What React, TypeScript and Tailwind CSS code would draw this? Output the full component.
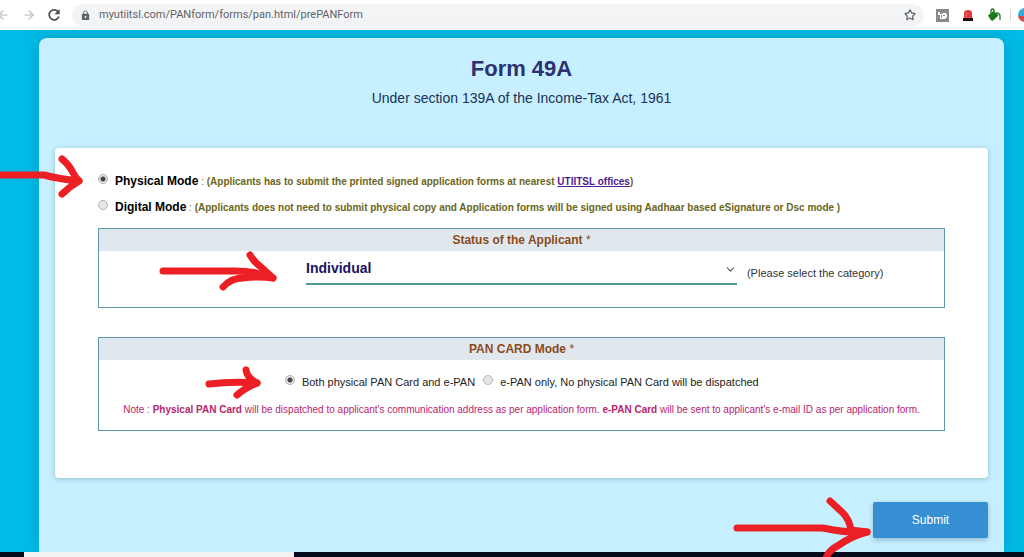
import { useState } from "react";
import type { ReactNode } from "react";
import { ArrowLeft, ArrowRight, ChevronDown, Star } from "lucide-react";
import { MdLock } from "react-icons/md";

type ArrowProps = {
  className: string;
  width: number;
  height: number;
  shaft: string;
  head: string;
};

function Arrow({ className, width, height, shaft, head }: ArrowProps) {
  return (
    <svg
      className={`pointer-events-none absolute z-10 overflow-visible ${className}`}
      width={width}
      height={height}
      fill="none"
      stroke="#ec2024"
      strokeWidth="7"
      strokeLinecap="round"
      strokeLinejoin="round"
      aria-hidden="true"
    >
      <path d={shaft} />
      <path d={head} />
    </svg>
  );
}

type RadioProps = {
  name: string;
  value: string;
  current: string;
  onSelect: (value: string) => void;
  className: string;
  children: ReactNode;
};

function Radio({ name, value, current, onSelect, className, children }: RadioProps) {
  const id = `${name}-${value}`;
  return (
    <div className={`flex items-center ${className}`}>
      <input
        id={id}
        type="radio"
        name={name}
        value={value}
        checked={current === value}
        onChange={() => onSelect(value)}
        className="mb-1 size-[10px] shrink-0 appearance-none rounded-full border border-[#b4b4b4] bg-[#e6e6e6] checked:bg-[radial-gradient(circle,#444_0_2px,#e6e6e6_3px)]"
      />
      <label htmlFor={id}>{children}</label>
    </div>
  );
}

function BrowserBar() {
  return (
    <header className="flex h-[30px] shrink-0 items-center overflow-hidden bg-white text-[#5f6368]">
      <button type="button" aria-label="Back" className="-ml-1 text-[#b5b5b5]">
        <ArrowLeft size={14} strokeWidth={2} />
      </button>
      <button type="button" aria-label="Forward" className="ml-3 text-[#b5b5b5]">
        <ArrowRight size={14} strokeWidth={2} />
      </button>
      <button type="button" aria-label="Reload" className="ml-[10px] text-[#4c4f53]">
        <svg width="16" height="16" viewBox="0 0 16 16" aria-hidden="true">
          <path fill="none" stroke="currentColor" strokeWidth="1.8" d="M12.300 5A5 5 0 1 0 12.900 9.500" />
          <path fill="currentColor" d="M13.700 2v5.300H8.400z" />
        </svg>
      </button>
      <div className="ml-[10px] flex h-[22px] min-w-0 flex-1 items-center rounded-full bg-[#f3f4f5] pr-2 pl-2">
        <MdLock size={11} className="shrink-0" />
        <input
          aria-label="Address"
          defaultValue="myutiitsl.com/PANform/forms/pan.html/prePANForm"
          className="ml-2 min-w-0 flex-1 bg-transparent font-['Roboto',sans-serif] text-[11px] outline-none"
        />
        <button type="button" aria-label="Bookmark">
          <Star size={12} strokeWidth={2.5} />
        </button>
      </div>
      <div className="ml-3 flex items-center gap-[13px]">
        <svg width="13" height="13" viewBox="0 0 13 13" aria-hidden="true">
          <path fill="#8a8a8a" d="M0 0h13v13H0z" />
          <path fill="#fff" d="M2 3h2v2h2l1-1h3l1 2v2l-2 2H4V6H2z" />
          <path fill="#8a8a8a" d="M5 6h1v3H5zM7 6h2v1H7z" />
        </svg>
        <svg width="12" height="13" viewBox="0 0 12 13" aria-hidden="true">
          <path fill="#e5393b" d="M2 9V4q0-3 4-3t4 3v5z" />
          <path fill="#fff" opacity=".3" d="M4 3h1v5H4z" />
          <path fill="#200b0b" d="M1 9h10v3H1z" />
        </svg>
        <svg width="14" height="14" viewBox="0 0 14 14" aria-hidden="true">
          <path fill="#187a18" d="M1 7.500 6.500 3l5 4.500-5.500 5q-1 .5-2-.3z" />
          <path fill="none" stroke="#187a18" strokeWidth="1.300" d="M4 6V3q0-2 1.500-2T7 3v4M9 5q4 0 4 3v4" />
        </svg>
        <span className="-ml-1 h-3 w-px bg-[#d5d5d5]" />
        <span className="-mr-2 -ml-[6px] size-[14px] rounded-full bg-[linear-gradient(#3aa7d8_55%,#d34b45_55%)]" />
      </div>
    </header>
  );
}

function Panel({ title, children }: { title: string; children: ReactNode }) {
  return (
    <section className="relative border border-[#5c98ae]">
      <h2 className="bg-[#e1e8ed] text-center text-[12px] leading-[22px] font-bold text-[#8b4a1c]">
        {title} <span className="font-normal">*</span>
      </h2>
      {children}
    </section>
  );
}

export default function App() {
  const [mode, setMode] = useState("physical");
  const [panMode, setPanMode] = useState("both");
  const [status, setStatus] = useState("Individual");

  return (
    <div className="relative flex min-h-screen flex-col overflow-hidden bg-[#00bbe6] font-['Liberation_Sans',Arial,sans-serif]">
      <BrowserBar />

      <main className="relative mt-2 mr-5 ml-[39px] flex-1 rounded-t-lg bg-[#c6efff] px-4 pt-4 pb-[14px] shadow-[0_0_16px_rgba(0,110,130,0.35)]">
        <h1 className="text-center text-[22px] leading-[30px] font-bold text-[#2d3071]">Form 49A</h1>
        <p className="text-center text-[14px] leading-7 text-[#1c3258]">
          Under section 139A of the Income-Tax Act, 1961
        </p>

        <form onSubmit={(event) => event.preventDefault()}>
          <div className="relative mt-9 rounded bg-white px-[43px] pt-5 pb-[47px] shadow-[0_1px_5px_rgba(70,140,130,0.45)]">
            <Arrow
              className="top-2 -left-14"
              width={84}
              height={42}
              shaft="M0 19H45Q60 23 80 25"
              head="M63 3Q70 9 73 15T80 25Q70 31 63 38"
            />
            <Radio name="mode" value="physical" current={mode} onSelect={setMode} className="h-[26px] gap-[7px] text-[10px] text-[#6b6520]">
              <b className="text-[12px] text-black">Physical Mode</b> :{" "}
              <b>
                (Applicants has to submit the printed signed application forms at nearest{" "}
                <a href="#offices" className="text-[#50208c] underline">UTIITSL offices</a>)
              </b>
            </Radio>
            <Radio name="mode" value="digital" current={mode} onSelect={setMode} className="h-[26px] gap-[7px] text-[10px] text-[#6b6520]">
              <b className="text-[12px] text-black">Digital Mode</b> :{" "}
              <b>
                (Applicants does not need to submit physical copy and Application forms will be signed using Aadhaar based
                eSignature or Dsc mode )
              </b>
            </Radio>

            <div className="mt-2 flex flex-col gap-[29px]">
              <Panel title="Status of the Applicant">
                <Arrow
                  className="top-6 left-16"
                  width={114}
                  height={38}
                  shaft="M0 18H72Q94 18 110 25"
                  head="M87 2Q91 9 98 14L110 25Q96 23 80 25Q68 25 60 34"
                />
                <div className="flex items-start pb-[22px]">
                  <div className="relative ml-[24.5%] w-[51%]">
                    <select
                      aria-label="Status of the Applicant"
                      value={status}
                      onChange={(event) => setStatus(event.target.value)}
                      className="h-[34px] w-full appearance-none border-b-2 border-[#4d9c8f] bg-transparent pt-[3px] text-[14px] font-bold text-[#1a1262] outline-none"
                    >
                      <option>Individual</option>
                    </select>
                    <ChevronDown size={13} className="pointer-events-none absolute top-3 right-0 text-[#555]" />
                  </div>
                  <span className="mt-[14px] ml-[10px] text-[11px] leading-4 text-[#333]">(Please select the category)</span>
                </div>
              </Panel>

              <Panel title="PAN CARD Mode">
                <Arrow
                  className="top-8 left-[110px]"
                  width={50}
                  height={30}
                  shaft="M0 14Q24 11 48 13"
                  head="M37 0Q38 8 48 13Q36 18 28 25"
                />
                <div className="mt-[14px] ml-[22%] flex gap-2 text-[11px] leading-4 text-[#222]">
                  <Radio name="pan" value="both" current={panMode} onSelect={setPanMode} className="gap-[7px]">
                    Both physical PAN Card and e-PAN
                  </Radio>
                  <Radio name="pan" value="epan" current={panMode} onSelect={setPanMode} className="gap-[7px]">
                    e-PAN only, No physical PAN Card will be dispatched
                  </Radio>
                </div>
                <p className="mt-3 pb-3 text-center text-[10px] leading-4 text-[#b8246e]">
                  Note : <b>Physical PAN Card</b> will be dispatched to applicant's communication address as per application
                  form. <b>e-PAN Card</b> will be sent to applicant's e-mail ID as per application form.
                </p>
              </Panel>
            </div>
          </div>

          <div className="mt-6 flex justify-end">
            <div className="relative">
              <Arrow
                className="-top-1 -left-[140px]"
                width={136}
                height={60}
                shaft="M4 30H90Q112 35 134 34"
                head="M97 3L110 15Q116 21 118 32L134 34Q119 38 106 47Q96 52 93 60"
              />
              <button
                type="submit"
                className="h-9 w-[115px] rounded-xs bg-[#368fd2] text-[12px] text-white shadow-[0_2px_5px_rgba(70,110,130,0.4)]"
              >
                Submit
              </button>
            </div>
          </div>
        </form>
      </main>

      <footer className="relative h-[5px] shrink-0 bg-[#030b1c] pl-6">
        <div className="h-full w-[27%] bg-[#f3f2f3]" />
      </footer>
    </div>
  );
}
